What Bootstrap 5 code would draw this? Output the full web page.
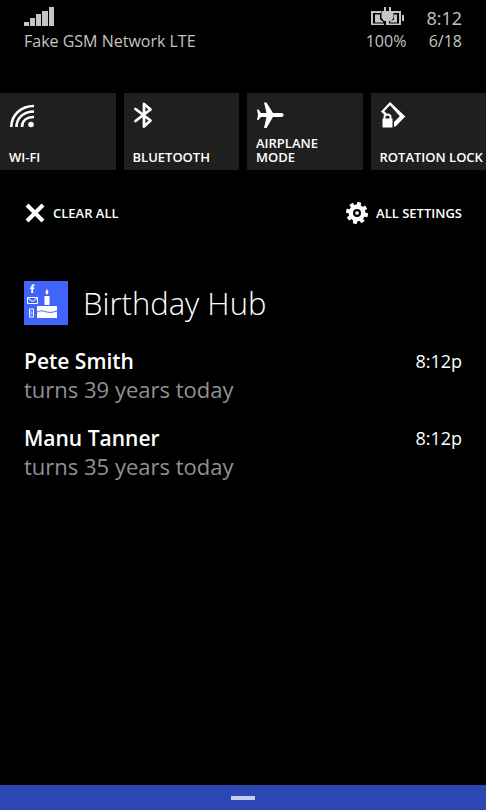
<!DOCTYPE html>
<html lang="en">
<head>
<meta charset="utf-8">
<meta name="viewport" content="width=device-width, initial-scale=1">
<title>Action center</title>
<link href="https://cdn.jsdelivr.net/npm/bootstrap@5.3.0/dist/css/bootstrap.min.css" rel="stylesheet">
<style>
  body { background: #000; color: #fff; font-family: "Open Sans", "Noto Sans", sans-serif; }
  svg { display: block; fill: currentColor; flex: none; }
  .side { padding-left: 24px; padding-right: 24px; }
  .status { padding-top: 6px; color: #c4c4c4; font-size: 16px; line-height: 22px; }
  .status-top { height: 24px; }
  .readings { gap: 20px; }
  .clock { font-size: 18px; line-height: 24px; }
  .tiles { margin-top: 41px; gap: 8px; }
  .tile { flex: 1 1 0; min-width: 0; height: 77px; padding: 8px 0 6px 9px; background: #1f1f1f; color: #fff; border: 0; font-size: 13px; line-height: 14px; font-weight: 600; text-align: left; }
  .actions { margin-top: 31px; }
  .action { padding: 0; gap: 8px; color: #fff; background: none; border: 0; font-size: 13px; line-height: 24px; font-weight: 600; }
  .hub { margin-top: 56px; gap: 15px; }
  .hub h1 { font-size: 31px; line-height: 42px; font-weight: 300; }
  .notes { margin-top: 22px; gap: 21px; }
  .note h2 { font-size: 21px; line-height: 28px; font-weight: 600; }
  .note p { font-size: 22px; line-height: 28px; color: #919191; }
  .note time { font-size: 18px; line-height: 28px; }
  .handle { height: 25px; background: #2b47b3; border: 0; }
  .grip { width: 24px; height: 4px; background: #c9cff0; }
</style>
<script src="https://cdn.jsdelivr.net/npm/bootstrap@5.3.0/dist/js/bootstrap.bundle.min.js" defer></script>
</head>
<body class="d-flex flex-column min-vh-100">
<header class="status side d-flex justify-content-between">
  <div>
    <div class="status-top">
      <svg width="30" height="20" viewBox="0 0 30 20" aria-label="Signal strength"><path d="M0 16h5v4H0zM6 12h5v8H6zM12 8h5v12h-5zM18 5h6v15h-6zM25 1h5v19h-5z"/></svg>
    </div>
    <div>Fake GSM Network LTE</div>
  </div>
  <div class="readings d-flex text-end">
    <div>
      <div class="status-top d-flex justify-content-end">
        <svg width="36" height="20" viewBox="0 0 36 20" aria-label="Battery charging"><path d="M1 5h10v2H3v10.500h11V19H1zM23 5h8v14H19v-1.500h10V7h-6zM32 9h2v6h-2zM5 8.500h5v5l3 2v1H5zM27 8.500v8h-7v-1l4-2v-5zM11.500 5H14V1h2v4h3V1h2v4h2.500v7L21 15h-2v4h-3v-4h-2l-2.500-3z"/></svg>
      </div>
      <div>100%</div>
    </div>
    <div>
      <div class="status-top clock">8:12</div>
      <div>6/18</div>
    </div>
  </div>
</header>

<main>
  <section class="tiles d-flex" aria-label="Quick actions">
    <button class="tile d-flex flex-column justify-content-between">
      <svg width="28" height="28" viewBox="0 0 28 28"><g fill="none" stroke="currentColor" stroke-width="2.600"><path d="M2.300 26C2.300 14 12 5 25 5"/><path d="M7.500 26C7.500 17 14.500 10.500 25 10.500"/><path d="M13 26C13 20 17.500 16 25 16"/></g><circle cx="22" cy="23.500" r="2.800"/></svg>
      <span>WI-FI</span>
    </button>
    <button class="tile d-flex flex-column justify-content-between">
      <svg width="28" height="28" viewBox="0 0 28 28"><path d="M2.500 8L17.500 19.500L11 25.500V3L17.500 8.500L2.500 20" fill="none" stroke="currentColor" stroke-width="2.800" stroke-linecap="round" stroke-linejoin="round"/></svg>
      <span>BLUETOOTH</span>
    </button>
    <button class="tile d-flex flex-column justify-content-between">
      <svg width="28" height="28" viewBox="0 0 28 28"><path d="M8 1.500h2.500L17 12h8.500c2.800.300 2.800 3.700 0 4H17l-6.500 11H8l2.500-11H5l-2.500 3H1l1-5-1-5.500h1.500L5 12h5.500z"/></svg>
      <span>AIRPLANE<br>MODE</span>
    </button>
    <button class="tile d-flex flex-column justify-content-between">
      <svg width="28" height="28" viewBox="0 0 28 28"><path fill-rule="evenodd" d="M10 1L25.300 15.500L15.500 25.500H14V21L19.800 15.300L10 4.300L4.300 10.300L7 13L5 14.500L1 10.500z"/><path d="M4.500 18v-2c0-3.500 6-3.500 6 0v2" fill="none" stroke="currentColor" stroke-width="2"/><path d="M2.500 17.500h10v9h-10z"/></svg>
      <span class="text-nowrap">ROTATION LOCK</span>
    </button>
  </section>

  <div class="actions side d-flex justify-content-between">
    <button class="action d-flex align-items-center">
      <svg width="21" height="20" viewBox="0 0 21 20"><path d="M3 2L19 18M19 2L3 18" stroke="currentColor" stroke-width="4"/></svg>
      CLEAR ALL
    </button>
    <button class="action d-flex align-items-center">
      <svg width="22" height="22" viewBox="-11 -11 22 22"><circle r="6.200" fill="none" stroke="currentColor" stroke-width="4.400"/><circle r="1.800"/><path d="M0-11V-7M0 7V11M-11 0H-7M7 0H11M-7.700-7.700L-5-5M5 5L7.700 7.700M7.700-7.700L5-5M-5 5L-7.700 7.700" stroke="currentColor" stroke-width="4" transform="rotate(12)"/></svg>
      ALL SETTINGS
    </button>
  </div>

  <section class="side">
    <div class="hub d-flex align-items-center">
      <svg width="44" height="44" viewBox="0 0 44 44" aria-hidden="true"><path fill="#4165fa" d="M0 0h44v44H0z"/><path d="M7.300 12V8H6V6.500h1.300C7 4 8 3 10.500 3.300V5C9.300 4.900 9.100 5.200 9.200 6.500h1.300L10.300 8H9.200v4zM20.500 15h5v9h-5zM23 8c2 3 1.700 5 0 5.500C21.300 13 21 11 23 8zM13 25h20v12H13z"/><g fill="none" stroke="#fff"><path d="M3.500 16.500h10v6h-10zM3.500 17l5 3.500 5-3.500"/><path d="M5.500 28h4v8h-4zM6.500 31h2M6.500 33h2"/></g><path d="M13 31c4-2 6-1 10 0s6 0 10-1" fill="none" stroke="#4165fa"/></svg>
      <h1 class="m-0">Birthday Hub</h1>
    </div>
    <div class="notes d-flex flex-column">
      <article class="note d-flex justify-content-between">
        <div><h2 class="m-0">Pete Smith</h2><p class="m-0">turns 39 years today</p></div>
        <time>8:12p</time>
      </article>
      <article class="note d-flex justify-content-between">
        <div><h2 class="m-0">Manu Tanner</h2><p class="m-0">turns 35 years today</p></div>
        <time>8:12p</time>
      </article>
    </div>
  </section>
</main>

<button class="handle w-100 mt-auto d-flex align-items-center justify-content-center" aria-label="Close action center"><span class="grip"></span></button>
</body>
</html>
